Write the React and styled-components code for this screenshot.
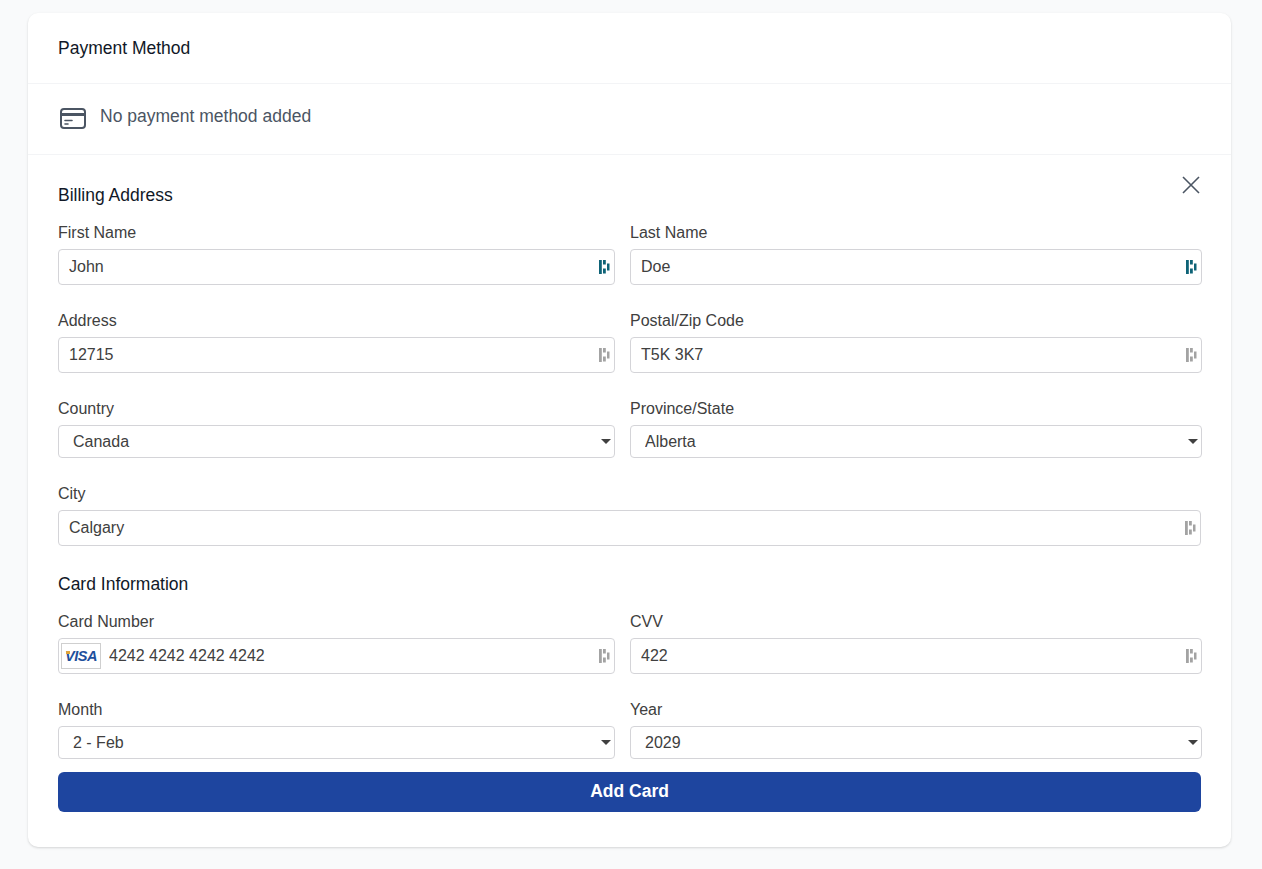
import React from 'react';
import styled, { createGlobalStyle } from 'styled-components';

const GlobalStyle = createGlobalStyle`
  html, body {
    margin: 0;
    background: #f9fafb;
    font-family: "Liberation Sans", Arial, sans-serif;
  }
`;

const Page = styled.div`
  padding: 13px 31px 22px 28px;
`;

const Card = styled.div`
  background: #fff;
  border-radius: 10px;
  box-shadow: 0 1px 3px rgba(0, 0, 0, 0.1), 0 1px 2px rgba(0, 0, 0, 0.06);
`;

const Header = styled.div`
  height: 70px;
  padding: 0 30px;
  display: flex;
  align-items: center;
  border-bottom: 1px solid #f3f4f6;
  font-size: 17.5px;
  color: #111827;
`;

const EmptyRow = styled.div`
  height: 70px;
  padding: 0 30px;
  display: flex;
  align-items: center;
  gap: 14px;
  border-bottom: 1px solid #f3f4f6;
  font-size: 17.5px;
  color: #4b5563;
`;

const EmptyText = styled.span`
  margin-bottom: 6px;
`;

const CardIcon = styled.svg`
  width: 28px;
  height: 28px;
  color: #4b5563;
`;

const Form = styled.form`
  position: relative;
  padding: 30px 30px 35px;
`;

const CloseButton = styled.button`
  position: absolute;
  top: 18px;
  right: 28px;
  width: 24px;
  height: 24px;
  padding: 0;
  border: 0;
  background: none;
  color: #4b5563;
`;

const SectionTitle = styled.h3`
  margin: 0 0 17px;
  font-size: 17.5px;
  line-height: 20px;
  font-weight: 400;
  color: #111827;
`;

const FieldGrid = styled.div`
  display: grid;
  grid-template-columns: 557px 572px;
  column-gap: 15px;
`;

const Field = styled.div`
  grid-column: ${props => (props.wide ? '1 / -1' : 'auto')};
  width: ${props => (props.wide ? '1143px' : 'auto')};
  margin-bottom: ${props => props.gap}px;
`;

const Label = styled.label`
  display: block;
  height: 20px;
  margin-bottom: 7px;
  font-size: 16px;
  line-height: 22px;
  color: #404040;
`;

const InputWrap = styled.div`
  position: relative;
  height: 36px;
  box-sizing: border-box;
  border: 1px solid #d4d4d8;
  border-radius: 4px;
  background: #fff;
  display: flex;
  align-items: center;
`;

const TextInput = styled.input`
  flex: 1;
  min-width: 0;
  height: 100%;
  box-sizing: border-box;
  border: 0;
  outline: none;
  background: none;
  padding: 0 30px 0 ${props => (props.visa ? '8px' : '10px')};
  font: 16px "Liberation Sans", Arial, sans-serif;
  color: #404040;
`;

const FillIcon = styled.svg`
  position: absolute;
  right: 4px;
  top: 9px;
  width: 12px;
  height: 16px;
  color: ${props => (props.active ? '#0e6377' : '#a3a3a3')};
`;

const SelectWrap = styled.div`
  position: relative;
  height: 33px;
`;

const Select = styled.select`
  width: 100%;
  height: 100%;
  box-sizing: border-box;
  appearance: none;
  border: 1px solid #d4d4d8;
  border-radius: 4px;
  background: #fff;
  padding: 0 24px 0 14px;
  font: 16px "Liberation Sans", Arial, sans-serif;
  color: #404040;
`;

const Caret = styled.span`
  position: absolute;
  right: 4px;
  top: 14px;
  width: 0;
  height: 0;
  border-left: 5px solid transparent;
  border-right: 5px solid transparent;
  border-top: 5px solid #404040;
  pointer-events: none;
`;

const VisaBadge = styled.div`
  position: relative;
  flex: none;
  width: 40px;
  height: 26px;
  margin-left: 2px;
  box-sizing: border-box;
  border: 1px solid #cfcfcf;
  display: flex;
  align-items: center;
  justify-content: center;
  font-size: 14.5px;
  font-weight: 700;
  font-style: italic;
  letter-spacing: -0.4px;
  color: #1e4f9c;

  &::before {
    content: "";
    position: absolute;
    left: 4px;
    top: 7px;
    width: 4px;
    height: 3px;
    background: #e2a63a;
    border-radius: 1px 0 0 0;
  }
`;

const SubmitButton = styled.button`
  display: block;
  width: 1143px;
  height: 40px;
  padding: 0 0 2px;
  border: 0;
  border-radius: 6px;
  background: #1e459f;
  color: #fff;
  font: 700 17.5px "Liberation Sans", Arial, sans-serif;
`;

const FillGlyph = ({ active }) => (
  <FillIcon active={active} viewBox="0 0 12 16" fill="currentColor">
    <rect x="1" y="1" width="2.8" height="14" />
    <rect x="5" y="1" width="2.8" height="4.5" />
    <rect x="5" y="9.5" width="2.8" height="5" />
    <rect x="9" y="4.5" width="2.5" height="7" />
  </FillIcon>
);

const InputField = ({ label, value, active, visa, wide, gap = 25 }) => (
  <Field wide={wide} gap={gap}>
    <Label>{label}</Label>
    <InputWrap>
      {visa && <VisaBadge>VISA</VisaBadge>}
      <TextInput visa={visa} value={value} readOnly />
      <FillGlyph active={active} />
    </InputWrap>
  </Field>
);

const SelectField = ({ label, value, gap = 25 }) => (
  <Field gap={gap}>
    <Label>{label}</Label>
    <SelectWrap>
      <Select value={value} onChange={() => {}}>
        <option>{value}</option>
      </Select>
      <Caret />
    </SelectWrap>
  </Field>
);

export default function App() {
  return (
    <Page>
      <GlobalStyle />
      <Card>
        <Header>Payment Method</Header>
        <EmptyRow>
          <CardIcon viewBox="0 0 28 28" fill="none" stroke="currentColor" strokeWidth="2" strokeLinecap="round" strokeLinejoin="round">
            <rect x="3" y="4" width="24" height="19" rx="3" />
            <path d="M3 9.5h24" strokeWidth="3" strokeLinecap="butt" />
            <path d="M7 15.5h7M7 19h3" strokeWidth="1.6" />
          </CardIcon>
          <EmptyText>No payment method added</EmptyText>
        </EmptyRow>
        <Form>
          <CloseButton type="button">
            <svg viewBox="0 0 24 24" width="24" height="24" fill="none" stroke="currentColor" strokeWidth="1.6">
              <path d="M4 4l16 16M20 4L4 20" />
            </svg>
          </CloseButton>
          <SectionTitle>Billing Address</SectionTitle>
          <FieldGrid>
            <InputField label="First Name" value="John" active />
            <InputField label="Last Name" value="Doe" active />
            <InputField label="Address" value="12715" />
            <InputField label="Postal/Zip Code" value="T5K 3K7" />
            <SelectField label="Country" value="Canada" />
            <SelectField label="Province/State" value="Alberta" />
            <InputField label="City" value="Calgary" wide gap={28} />
          </FieldGrid>
          <SectionTitle>Card Information</SectionTitle>
          <FieldGrid>
            <InputField label="Card Number" value="4242 4242 4242 4242" visa />
            <InputField label="CVV" value="422" />
            <SelectField label="Month" value="2 - Feb" gap={13} />
            <SelectField label="Year" value="2029" gap={13} />
          </FieldGrid>
          <SubmitButton type="button">Add Card</SubmitButton>
        </Form>
      </Card>
    </Page>
  );
}
